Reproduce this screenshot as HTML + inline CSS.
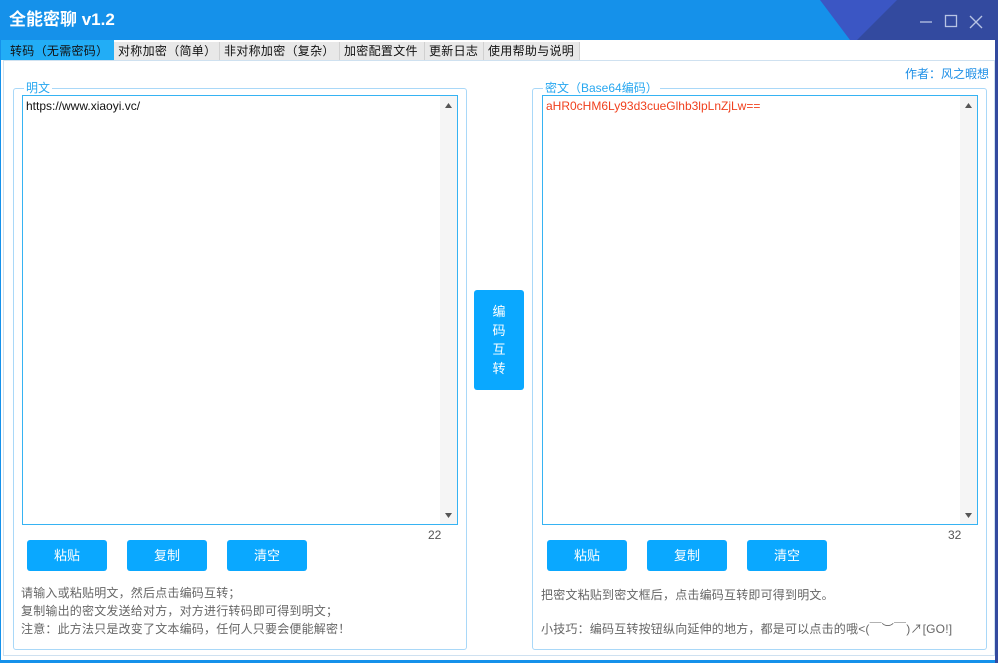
<!DOCTYPE html>
<html><head><meta charset="utf-8"><style>
*{margin:0;padding:0;box-sizing:border-box}
body{width:998px;height:663px;overflow:hidden;background:#1591ea;font-family:"Liberation Sans","Noto Sans CJK SC",sans-serif;position:relative}
.abs{position:absolute}
.title{left:0;top:0;width:998px;height:40px;background:#1591ea;overflow:hidden}
.win{left:1px;top:40px;width:994px;height:620px;background:#fff}
.tabs{left:1px;top:40px;width:994px;height:20px;background:#fff}
.tab{position:absolute;top:2px;height:18px;background:#e8e8e8;font-size:12px;line-height:19px;color:#111;padding-left:4px;border-right:1px solid #d0d0d0;letter-spacing:0.3px}
.content{left:3px;top:60px;width:992px;height:596px;border:1px solid #cfe1f0;background:#fff}
.grp{border:1px solid #a9d8f8;border-radius:3px}
.lbl{font-size:12px;color:#27a7f0;background:#fff;padding:0 2px;line-height:14px}
.ta{border:1px solid #36b3f3;background:#fff}
.sb{position:absolute;right:0;top:0;bottom:0;width:17px;background:#f5f5f5}
.btn{background:#0aa8ff;color:#fff;font-size:13px;text-align:center;border-radius:3px;line-height:31px;width:80px;height:31px}
.tx{font-size:12px;color:#666;line-height:18px;letter-spacing:0.2px}
</style></head><body>
<div class="abs title">
<svg class="abs" style="left:0;top:0" width="998" height="40"><polygon points="820,0 998,0 998,40 850,40" fill="#3b56c4"/><polygon points="897,0 998,0 998,40 857,40" fill="#334a9f"/>
<g stroke="#b8c4e4" stroke-width="1.3" fill="none"><line x1="920" y1="22" x2="932" y2="22"/><rect x="945.5" y="15.5" width="11" height="11"/><line x1="970" y1="16" x2="982" y2="28"/><line x1="982" y1="16" x2="970" y2="28"/></g></svg>
<div class="abs" style="left:9px;top:10px;color:#fff;font-size:17px;font-weight:bold;line-height:20px">全能密聊 v1.2</div>
</div>
<div class="abs win"></div>
<div class="abs" style="left:995px;top:0;width:3px;height:663px;background:#334a9f"></div>
<div class="abs tabs">
<div class="tab" style="left:0;width:113px;background:#22adf6;border:none;top:0;height:20px;line-height:22px;padding-left:9px">转码（无需密码）</div>
<div class="tab" style="left:113px;width:106px">对称加密（简单）</div>
<div class="tab" style="left:219px;width:120px">非对称加密（复杂）</div>
<div class="tab" style="left:339px;width:85px">加密配置文件</div>
<div class="tab" style="left:424px;width:59px">更新日志</div>
<div class="tab" style="left:483px;width:96px">使用帮助与说明</div>
</div>
<div class="abs content"></div>
<div class="abs" style="left:905px;top:65px;font-size:12px;color:#1c8ee6">作者：风之暇想</div>

<div class="abs grp" style="left:13px;top:88px;width:454px;height:562px"></div>
<div class="abs lbl" style="left:24px;top:81px">明文</div>
<div class="abs ta" style="left:22px;top:95px;width:436px;height:430px"><div class="sb"><svg width="17" height="430"><polygon points="5,12 12,12 8.5,7" fill="#555"/><polygon points="5,417 12,417 8.5,422" fill="#555"/></svg></div>
<div style="font-size:12px;color:#111;padding:3px 3px">https://www.xiaoyi.vc/</div></div>
<div class="abs" style="left:428px;top:528px;font-size:12px;color:#555">22</div>
<div class="abs btn" style="left:27px;top:540px">粘贴</div>
<div class="abs btn" style="left:127px;top:540px">复制</div>
<div class="abs btn" style="left:227px;top:540px">清空</div>
<div class="abs tx" style="left:21px;top:584px">请输入或粘贴明文，然后点击编码互转；<br>复制输出的密文发送给对方，对方进行转码即可得到明文；<br>注意：此方法只是改变了文本编码，任何人只要会便能解密！</div>

<div class="abs btn" style="left:474px;top:290px;width:50px;height:100px;line-height:19px;font-size:13px;padding-top:12px">编<br>码<br>互<br>转</div>

<div class="abs grp" style="left:532px;top:88px;width:455px;height:562px"></div>
<div class="abs lbl" style="left:543px;top:81px">密文（Base64编码）</div>
<div class="abs ta" style="left:542px;top:95px;width:436px;height:430px"><div class="sb"><svg width="17" height="430"><polygon points="5,12 12,12 8.5,7" fill="#555"/><polygon points="5,417 12,417 8.5,422" fill="#555"/></svg></div>
<div style="font-size:12px;color:#f0401e;padding:3px 3px">aHR0cHM6Ly93d3cueGlhb3lpLnZjLw==</div></div>
<div class="abs" style="left:948px;top:528px;font-size:12px;color:#555">32</div>
<div class="abs btn" style="left:547px;top:540px">粘贴</div>
<div class="abs btn" style="left:647px;top:540px">复制</div>
<div class="abs btn" style="left:747px;top:540px">清空</div>
<div class="abs tx" style="left:541px;top:586px">把密文粘贴到密文框后，点击编码互转即可得到明文。</div>
<div class="abs tx" style="left:541px;top:620px">小技巧：编码互转按钮纵向延伸的地方，都是可以点击的哦&lt;(￣︶￣)↗[GO!]</div>
</body></html>
